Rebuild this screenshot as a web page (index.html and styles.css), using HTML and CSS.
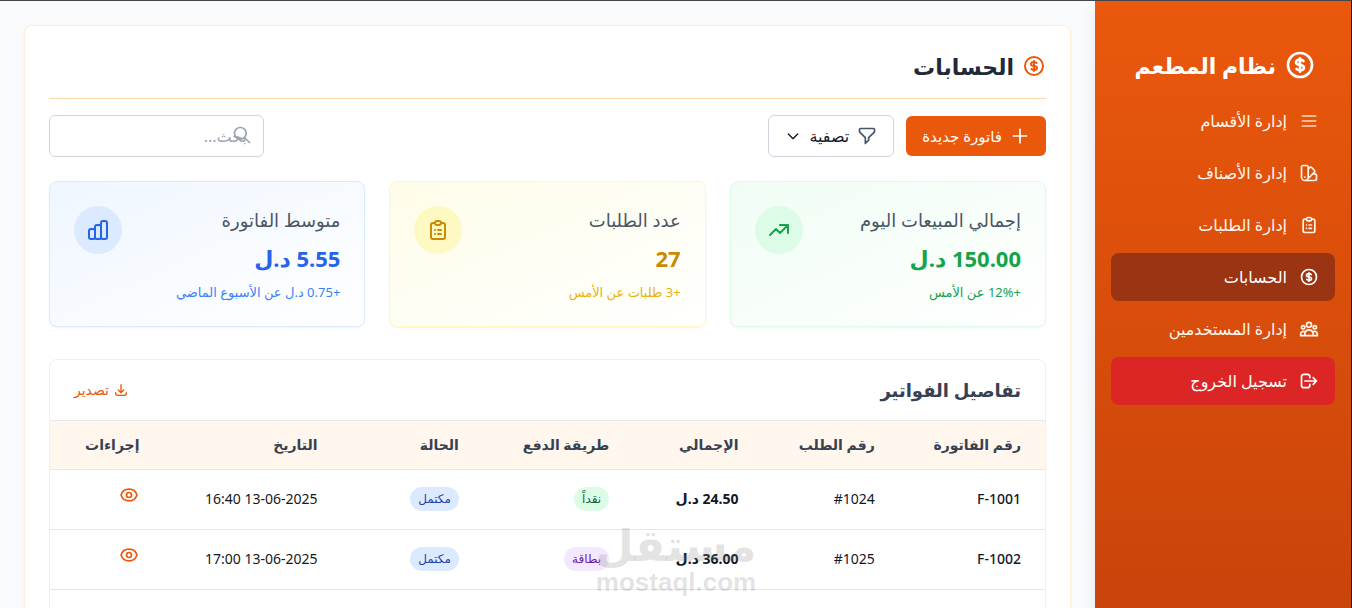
FILE: index.html
```html
<!DOCTYPE html>
<html lang="ar" dir="rtl">
<head>
    <meta charset="UTF-8">
    <meta name="viewport" content="width=device-width, initial-scale=1.0">
    <title>الحسابات - نظام المطعم</title>
    <link rel="stylesheet" href="styles.css">
</head>
<body>
    <!-- Shared icons -->
    <svg class="icon-defs" aria-hidden="true">
        <symbol id="icon-dollar" viewBox="0 0 24 24"><path d="M12 8c-1.657 0-3 .895-3 2s1.343 2 3 2 3 .895 3 2-1.343 2-3 2m0-8c1.11 0 2.08.402 2.599 1M12 8V7m0 1v8m0 0v1m0-1c-1.11 0-2.08-.402-2.599-1M21 12a9 9 0 11-18 0 9 9 0 0118 0z"/></symbol>
        <symbol id="icon-clipboard" viewBox="0 0 24 24"><path d="M9 5H7a2 2 0 00-2 2v12a2 2 0 002 2h10a2 2 0 002-2V7a2 2 0 00-2-2h-2M9 5a2 2 0 002 2h2a2 2 0 002-2M9 5a2 2 0 012-2h2a2 2 0 012 2m-3 7h3m-3 4h3m-6-4h.01M9 16h.01"/></symbol>
        <symbol id="icon-eye" viewBox="0 0 24 24"><path d="M15 12a3 3 0 11-6 0 3 3 0 016 0z"/><path d="M2.458 12C3.732 7.943 7.523 5 12 5c4.478 0 8.268 2.943 9.542 7-1.274 4.057-5.064 7-9.542 7-4.477 0-8.268-2.943-9.542-7z"/></symbol>
    </svg>

    <div class="layout">
        <!-- Sidebar -->
        <aside class="sidebar">
            <div class="brand">
                <svg class="icon icon-lg"><use href="#icon-dollar"/></svg>
                <span>نظام المطعم</span>
            </div>
            <nav class="menu">
                <a href="#" class="menu-item">
                    <svg class="icon icon-muted" viewBox="0 0 24 24"><path d="M4 6h16M4 12h16M4 18h16"/></svg>
                    <span>إدارة الأقسام</span>
                </a>
                <a href="#" class="menu-item">
                    <svg class="icon" viewBox="0 0 24 24"><path d="M7 21a4 4 0 01-4-4V5a2 2 0 012-2h4a2 2 0 012 2v12a4 4 0 01-4 4zm0 0h12a2 2 0 002-2v-4a2 2 0 00-2-2h-2.343M11 7.343l1.657-1.657a2 2 0 012.828 0l2.829 2.829a2 2 0 010 2.828l-8.486 8.485M7 17h.01"/></svg>
                    <span>إدارة الأصناف</span>
                </a>
                <a href="#" class="menu-item">
                    <svg class="icon"><use href="#icon-clipboard"/></svg>
                    <span>إدارة الطلبات</span>
                </a>
                <a href="#" class="menu-item active">
                    <svg class="icon"><use href="#icon-dollar"/></svg>
                    <span>الحسابات</span>
                </a>
                <a href="#" class="menu-item">
                    <svg class="icon" viewBox="0 0 24 24"><path d="M17 20h5v-2a3 3 0 00-5.356-1.857M17 20H7m10 0v-2c0-.656-.126-1.283-.356-1.857M7 20H2v-2a3 3 0 015.356-1.857M7 20v-2c0-.656.126-1.283.356-1.857m0 0a5.002 5.002 0 019.288 0M15 7a3 3 0 11-6 0 3 3 0 016 0zm6 3a2 2 0 11-4 0 2 2 0 014 0zM7 10a2 2 0 11-4 0 2 2 0 014 0z"/></svg>
                    <span>إدارة المستخدمين</span>
                </a>
                <a href="#" class="menu-item logout">
                    <svg class="icon" viewBox="0 0 24 24"><path d="M17 16l4-4m0 0l-4-4m4 4H7m6 4v1a3 3 0 01-3 3H6a3 3 0 01-3-3V7a3 3 0 013-3h4a3 3 0 013 3v1"/></svg>
                    <span>تسجيل الخروج</span>
                </a>
            </nav>
        </aside>

        <!-- Main content -->
        <main class="content">
            <section class="panel">
                <h1 class="page-title">
                    <svg class="icon icon-md"><use href="#icon-dollar"/></svg>
                    <span>الحسابات</span>
                </h1>

                <div class="toolbar">
                    <div class="toolbar-actions">
                        <button type="button" class="btn btn-primary">
                            <svg class="icon" viewBox="0 0 24 24"><path d="M12 4v16M4 12h16"/></svg>
                            <span>فاتورة جديدة</span>
                        </button>
                        <button type="button" class="btn btn-outline">
                            <svg class="icon icon-slate" viewBox="0 0 24 24"><path d="M3 4a1 1 0 011-1h16a1 1 0 011 1v2.586a1 1 0 01-.293.707l-6.414 6.414a1 1 0 00-.293.707V17l-4 4v-6.586a1 1 0 00-.293-.707L3.293 7.293A1 1 0 013 6.586V4z"/></svg>
                            <span>تصفية</span>
                            <svg class="icon icon-sm" viewBox="0 0 24 24"><path d="M19 9l-7 7-7-7"/></svg>
                        </button>
                    </div>
                    <div class="search">
                        <input type="text" placeholder="بحث..." aria-label="بحث">
                        <svg class="icon search-icon" viewBox="0 0 24 24"><path d="M21 21l-6-6m2-5a7 7 0 11-14 0 7 7 0 0114 0z"/></svg>
                    </div>
                </div>

                <!-- Stats -->
                <div class="stats">
                    <div class="stat stat-green">
                        <div>
                            <h2 class="stat-label">إجمالي المبيعات اليوم</h2>
                            <p class="stat-value">150.00 د.ل</p>
                            <p class="stat-note">+12% عن الأمس</p>
                        </div>
                        <div class="stat-icon">
                            <svg class="icon icon-md" viewBox="0 0 24 24"><path d="M13 7h8m0 0v8m0-8l-8 8-4-4-6 6"/></svg>
                        </div>
                    </div>
                    <div class="stat stat-yellow">
                        <div>
                            <h2 class="stat-label">عدد الطلبات</h2>
                            <p class="stat-value">27</p>
                            <p class="stat-note">+3 طلبات عن الأمس</p>
                        </div>
                        <div class="stat-icon">
                            <svg class="icon icon-md"><use href="#icon-clipboard"/></svg>
                        </div>
                    </div>
                    <div class="stat stat-blue">
                        <div>
                            <h2 class="stat-label">متوسط الفاتورة</h2>
                            <p class="stat-value">5.55 د.ل</p>
                            <p class="stat-note">+0.75 د.ل عن الأسبوع الماضي</p>
                        </div>
                        <div class="stat-icon">
                            <svg class="icon icon-md" viewBox="0 0 24 24"><path d="M9 19v-6a2 2 0 00-2-2H5a2 2 0 00-2 2v6a2 2 0 002 2h2a2 2 0 002-2zm0 0V9a2 2 0 012-2h2a2 2 0 012 2v10m-6 0a2 2 0 002 2h2a2 2 0 002-2m0 0V5a2 2 0 012-2h2a2 2 0 012 2v14a2 2 0 01-2 2h-2a2 2 0 01-2-2z"/></svg>
                        </div>
                    </div>
                </div>

                <!-- Invoices -->
                <div class="invoices">
                    <div class="invoices-header">
                        <h2>تفاصيل الفواتير</h2>
                        <button type="button" class="export">
                            <svg class="icon icon-sm" viewBox="0 0 24 24"><path d="M4 16v1a3 3 0 003 3h10a3 3 0 003-3v-1m-4-4l-4 4m0 0l-4-4m4 4V4"/></svg>
                            <span>تصدير</span>
                        </button>
                    </div>
                    <table>
                        <thead>
                            <tr>
                                <th class="col-invoice">رقم الفاتورة</th>
                                <th class="col-order">رقم الطلب</th>
                                <th class="col-total">الإجمالي</th>
                                <th class="col-method">طريقة الدفع</th>
                                <th class="col-status">الحالة</th>
                                <th class="col-date">التاريخ</th>
                                <th class="col-actions">إجراءات</th>
                            </tr>
                        </thead>
                        <tbody>
                            <tr>
                                <td class="invoice-no">F-1001</td>
                                <td><bdi dir="ltr">#1024</bdi></td>
                                <td class="total">24.50 د.ل</td>
                                <td><span class="badge badge-green">نقداً</span></td>
                                <td><span class="badge badge-blue">مكتمل</span></td>
                                <td><bdi dir="ltr">16:40 13-06-2025</bdi></td>
                                <td><button type="button" class="view" aria-label="عرض"><svg class="icon"><use href="#icon-eye"/></svg></button></td>
                            </tr>
                            <tr>
                                <td class="invoice-no">F-1002</td>
                                <td><bdi dir="ltr">#1025</bdi></td>
                                <td class="total">36.00 د.ل</td>
                                <td><span class="badge badge-purple">بطاقة</span></td>
                                <td><span class="badge badge-blue">مكتمل</span></td>
                                <td><bdi dir="ltr">17:00 13-06-2025</bdi></td>
                                <td><button type="button" class="view" aria-label="عرض"><svg class="icon"><use href="#icon-eye"/></svg></button></td>
                            </tr>
                        </tbody>
                    </table>
                </div>
            </section>
        </main>
    </div>

    <div class="watermark">
        <span class="watermark-name">مستقل</span>
        <span class="watermark-url">mostaql.com</span>
    </div>
</body>
</html>
```
FILE: styles.css
```css
* {
    margin: 0;
    padding: 0;
    box-sizing: border-box;
}

body {
    font-family: "Noto Sans", "DejaVu Sans", sans-serif;
    font-size: 14px;
    line-height: 20px;
    color: #111827;
    background: #f8fafc;
    height: 100vh;
    overflow: hidden;
    border-top: 1px solid #45454a;
    border-right: 1px solid #1f1f1f;
}

button,
input {
    font: inherit;
    color: inherit;
}

button {
    cursor: pointer;
    border: none;
    background: none;
}

.icon-defs {
    display: none;
}

.icon {
    width: 20px;
    height: 20px;
    flex-shrink: 0;
    fill: none;
    stroke: currentColor;
    stroke-width: 2;
    stroke-linecap: round;
    stroke-linejoin: round;
}

.icon-sm {
    width: 16px;
    height: 16px;
}

.icon-md {
    width: 24px;
    height: 24px;
}

.icon-lg {
    width: 32px;
    height: 32px;
}

.icon-slate {
    color: #475569;
}

.icon-muted {
    opacity: 0.8;
}

.layout {
    display: flex;
    height: 100%;
}

/* Sidebar */
.sidebar {
    width: 256px;
    flex-shrink: 0;
    padding: 32px 16px 16px;
    color: white;
    background: linear-gradient(180deg, #ea580c 0%, #c9440b 100%);
    box-shadow: 0 10px 15px rgba(0, 0, 0, 0.08);
}

.brand {
    display: flex;
    align-items: center;
    gap: 8px;
    height: 64px;
    padding: 0 19px;
    font-size: 22px;
    font-weight: 700;
    line-height: 32px;
    white-space: nowrap;
}

.menu {
    display: flex;
    flex-direction: column;
    gap: 4px;
}

.menu-item {
    display: flex;
    align-items: center;
    gap: 12px;
    height: 48px;
    padding: 0 16px;
    border-radius: 8px;
    color: #fff7ed;
    text-decoration: none;
    font-size: 16px;
}

.menu-item.active {
    background: #9a3412;
    color: white;
}

.menu-item.logout {
    background: #dc2626;
    color: white;
}

/* Main panel */
.content {
    flex: 1;
    min-width: 0;
    padding: 24px;
}

.panel {
    min-height: 100%;
    padding: 24px;
    background: white;
    border: 1px solid #ffedd5;
    border-radius: 8px;
    box-shadow: 0 1px 2px rgba(0, 0, 0, 0.05);
}

.page-title {
    display: flex;
    align-items: center;
    gap: 8px;
    padding-bottom: 16px;
    margin-bottom: 16px;
    border-bottom: 1px solid #fed7aa;
    font-size: 22px;
    font-weight: 700;
    line-height: 32px;
    color: #1f2937;
}

.page-title .icon {
    color: #ea580c;
}

.toolbar {
    display: flex;
    justify-content: space-between;
    align-items: center;
    margin-bottom: 24px;
}

.toolbar-actions {
    display: flex;
    align-items: center;
    gap: 12px;
}

.btn {
    display: flex;
    align-items: center;
    gap: 8px;
    height: 40px;
    padding: 0 16px;
    border-radius: 6px;
    font-size: 15px;
}

.btn-primary {
    background: #ea580c;
    color: white;
}

.btn-outline {
    height: 42px;
    background: white;
    border: 1px solid #d1d5db;
    font-size: 16px;
}

.search {
    position: relative;
}

.search input {
    display: block;
    width: 215px;
    height: 42px;
    padding: 0 16px;
    border: 1px solid #d1d5db;
    border-radius: 6px;
    background: white;
    font-size: 16px;
}

.search input::placeholder {
    color: #9ca3af;
}

.search-icon {
    position: absolute;
    top: 10px;
    right: 12px;
    color: #9ca3af;
}

/* Stats */
.stats {
    display: grid;
    grid-template-columns: repeat(3, 1fr);
    gap: 24px;
    margin-bottom: 32px;
}

.stat {
    display: flex;
    justify-content: space-between;
    align-items: flex-start;
    padding: 24px;
    border: 1px solid;
    border-radius: 8px;
    box-shadow: 0 1px 2px rgba(0, 0, 0, 0.05);
}

.stat-label {
    font-size: 18px;
    font-weight: 400;
    line-height: 28px;
    color: #4b5563;
}

.stat-value {
    margin: 8px 0;
    font-size: 22px;
    font-weight: 700;
    line-height: 32px;
}

.stat-note {
    font-size: 13px;
}

.stat-icon {
    display: flex;
    align-items: center;
    justify-content: center;
    width: 48px;
    height: 48px;
    border-radius: 50%;
}

.stat-green {
    background: linear-gradient(to bottom right, #f0fdf4, #ffffff);
    border-color: #dcfce7;
}

.stat-green .stat-value,
.stat-green .stat-icon,
.stat-green .stat-note {
    color: #16a34a;
}

.stat-green .stat-icon {
    background: #dcfce7;
}

.stat-yellow {
    background: linear-gradient(to bottom right, #fefce8, #ffffff);
    border-color: #fef9c3;
}

.stat-yellow .stat-value,
.stat-yellow .stat-icon {
    color: #ca8a04;
}

.stat-yellow .stat-note {
    color: #eab308;
}

.stat-yellow .stat-icon {
    background: #fef9c3;
}

.stat-blue {
    background: linear-gradient(to bottom right, #eff6ff, #ffffff);
    border-color: #dbeafe;
}

.stat-blue .stat-value,
.stat-blue .stat-icon {
    color: #2563eb;
}

.stat-blue .stat-note {
    color: #3b82f6;
}

.stat-blue .stat-icon {
    background: #dbeafe;
}

/* Invoices table */
.invoices {
    min-height: 320px;
    border: 1px solid #ffedd5;
    border-radius: 8px;
}

.invoices-header {
    display: flex;
    justify-content: space-between;
    align-items: center;
    height: 61px;
    padding: 0 24px;
    border-bottom: 1px solid #e5e7eb;
}

.invoices-header h2 {
    font-size: 18px;
    font-weight: 700;
    line-height: 28px;
    color: #374151;
}

.export {
    display: flex;
    align-items: center;
    gap: 4px;
    color: #ea580c;
}

table {
    width: 100%;
    table-layout: fixed;
    border-collapse: collapse;
}

th,
td {
    padding: 0 24px;
    text-align: right;
    white-space: nowrap;
    border-bottom: 1px solid #e5e7eb;
}

th {
    height: 48px;
    background: #fff7ed;
    color: #374151;
    font-weight: 700;
}

td {
    height: 60px;
}

.col-invoice {
    width: 14.7%;
}

.col-order {
    width: 13.7%;
}

.col-total {
    width: 13%;
}

.col-method {
    width: 15.1%;
}

.col-status {
    width: 14.2%;
}

.col-date {
    width: 17.9%;
}

.col-actions {
    width: 11.4%;
}

.invoice-no {
    font-weight: 500;
}

.total {
    font-weight: 700;
}

.badge {
    display: inline-block;
    padding: 4px 8px;
    border-radius: 999px;
    font-size: 12px;
    line-height: 16px;
}

.badge-green {
    background: #dcfce7;
    color: #166534;
}

.badge-blue {
    background: #dbeafe;
    color: #1e40af;
}

.badge-purple {
    background: #f3e8ff;
    color: #6b21a8;
}

.view {
    display: block;
    padding-bottom: 8px;
    color: #ea580c;
}

.view .icon {
    display: block;
}

/* Watermark */
.watermark {
    position: absolute;
    top: 518px;
    left: 596px;
    display: flex;
    flex-direction: column;
    align-items: center;
    width: 160px;
    font-weight: 700;
    color: rgba(128, 128, 128, 0.22);
    pointer-events: none;
}

.watermark-name {
    font-size: 44px;
    line-height: 52px;
}

.watermark-url {
    font-family: "Liberation Sans", sans-serif;
    font-size: 26px;
    line-height: 24px;
}
```
